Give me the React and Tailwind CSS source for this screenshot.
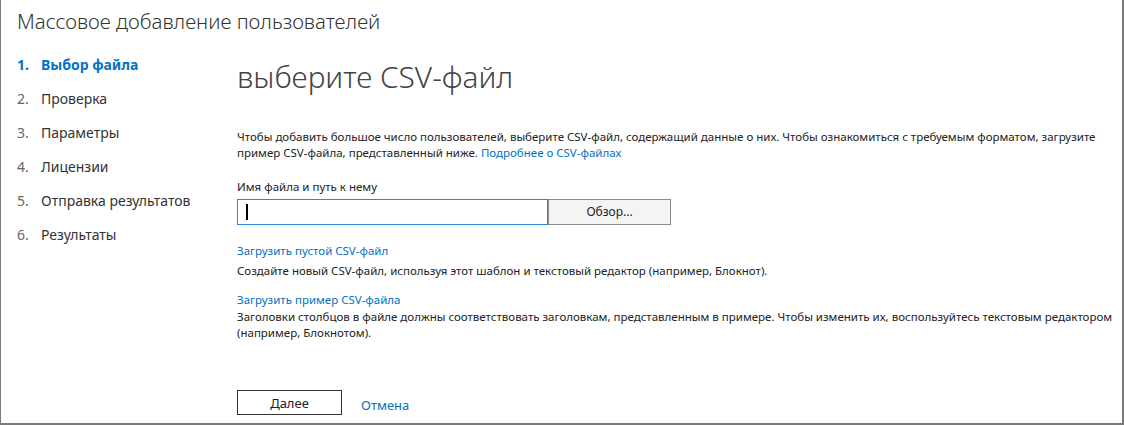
const steps = [
  'Выбор файла',
  'Проверка',
  'Параметры',
  'Лицензии',
  'Отправка результатов',
  'Результаты',
]

export default function App() {
  return (
    <div
      className="w-[1124px] h-[425px] bg-white border-l border-r-2 border-b-2 border-[#7a7a7a] text-[#333] overflow-hidden"
      style={{ fontFamily: '"Noto Sans", "Open Sans", sans-serif' }}
    >
      {/* Title */}
      <h1 className="pl-[16px] pt-[7px] text-[20.4px] leading-[28px] font-light text-[#333]">
        Массовое добавление пользователей
      </h1>

      <div className="flex">
        {/* Steps */}
        <ol className="w-[236px] shrink-0 pl-[16px] pt-[19px] text-[14px]">
          {steps.map((s, i) => (
            <li
              key={s}
              className={`flex h-[34px] items-start ${i === 0 ? 'font-bold text-[#0072c6]' : 'text-[#333]'}`}
            >
              <span className={`w-[24px] ${i === 0 ? '' : 'text-[#666]'}`}>{i + 1}.</span>
              <span>{s}</span>
            </li>
          ))}
        </ol>

        {/* Main */}
        <div className="flex-1 pt-[22px] text-[11.5px] leading-[16px] text-[#222]">
          <h2 className="text-[29.8px] leading-[40px] font-light text-[#444]">выберите CSV-файл</h2>

          <p className="mt-[32px] whitespace-nowrap">
            Чтобы добавить большое число пользователей, выберите CSV-файл, содержащий данные о них. Чтобы ознакомиться с требуемым форматом, загрузите
            <br />
            пример CSV-файла, представленный ниже.{' '}
            <a className="text-[#0072c6]">Подробнее о CSV-файлах</a>
          </p>

          <div className="mt-[18px]">Имя файла и путь к нему</div>
          <div className="mt-[4px] flex h-[26px]">
            <div className="w-[311px] border-[1.5px] border-[#2b88d8] flex items-center pl-[8px]">
              <span className="w-[1.5px] h-[16px] bg-black" />
            </div>
            <button className="w-[123px] border border-[#8a8a8a] bg-[#f4f4f4] text-[12px] text-[#222]">
              Обзор...
            </button>
          </div>

          <div className="mt-[18px]">
            <a className="text-[#0072c6]">Загрузить пустой CSV-файл</a>
          </div>
          <div className="mt-[4px]">
            Создайте новый CSV-файл, используя этот шаблон и текстовый редактор (например, Блокнот).
          </div>

          <div className="mt-[13px]">
            <a className="text-[#0072c6]">Загрузить пример CSV-файла</a>
          </div>
          <p className="mt-[1px] whitespace-nowrap">
            Заголовки столбцов в файле должны соответствовать заголовкам, представленным в примере. Чтобы изменить их, воспользуйтесь текстовым редактором
            <br />
            (например, Блокнотом).
          </p>

          <div className="mt-[49px] flex items-end gap-[19px]">
            <button className="w-[105px] h-[25px] border border-[#333] bg-white text-[13px] text-[#222]">Далее</button>
            <a className="text-[13px] text-[#0072c6] leading-[20px]">Отмена</a>
          </div>
        </div>
      </div>
    </div>
  )
}
